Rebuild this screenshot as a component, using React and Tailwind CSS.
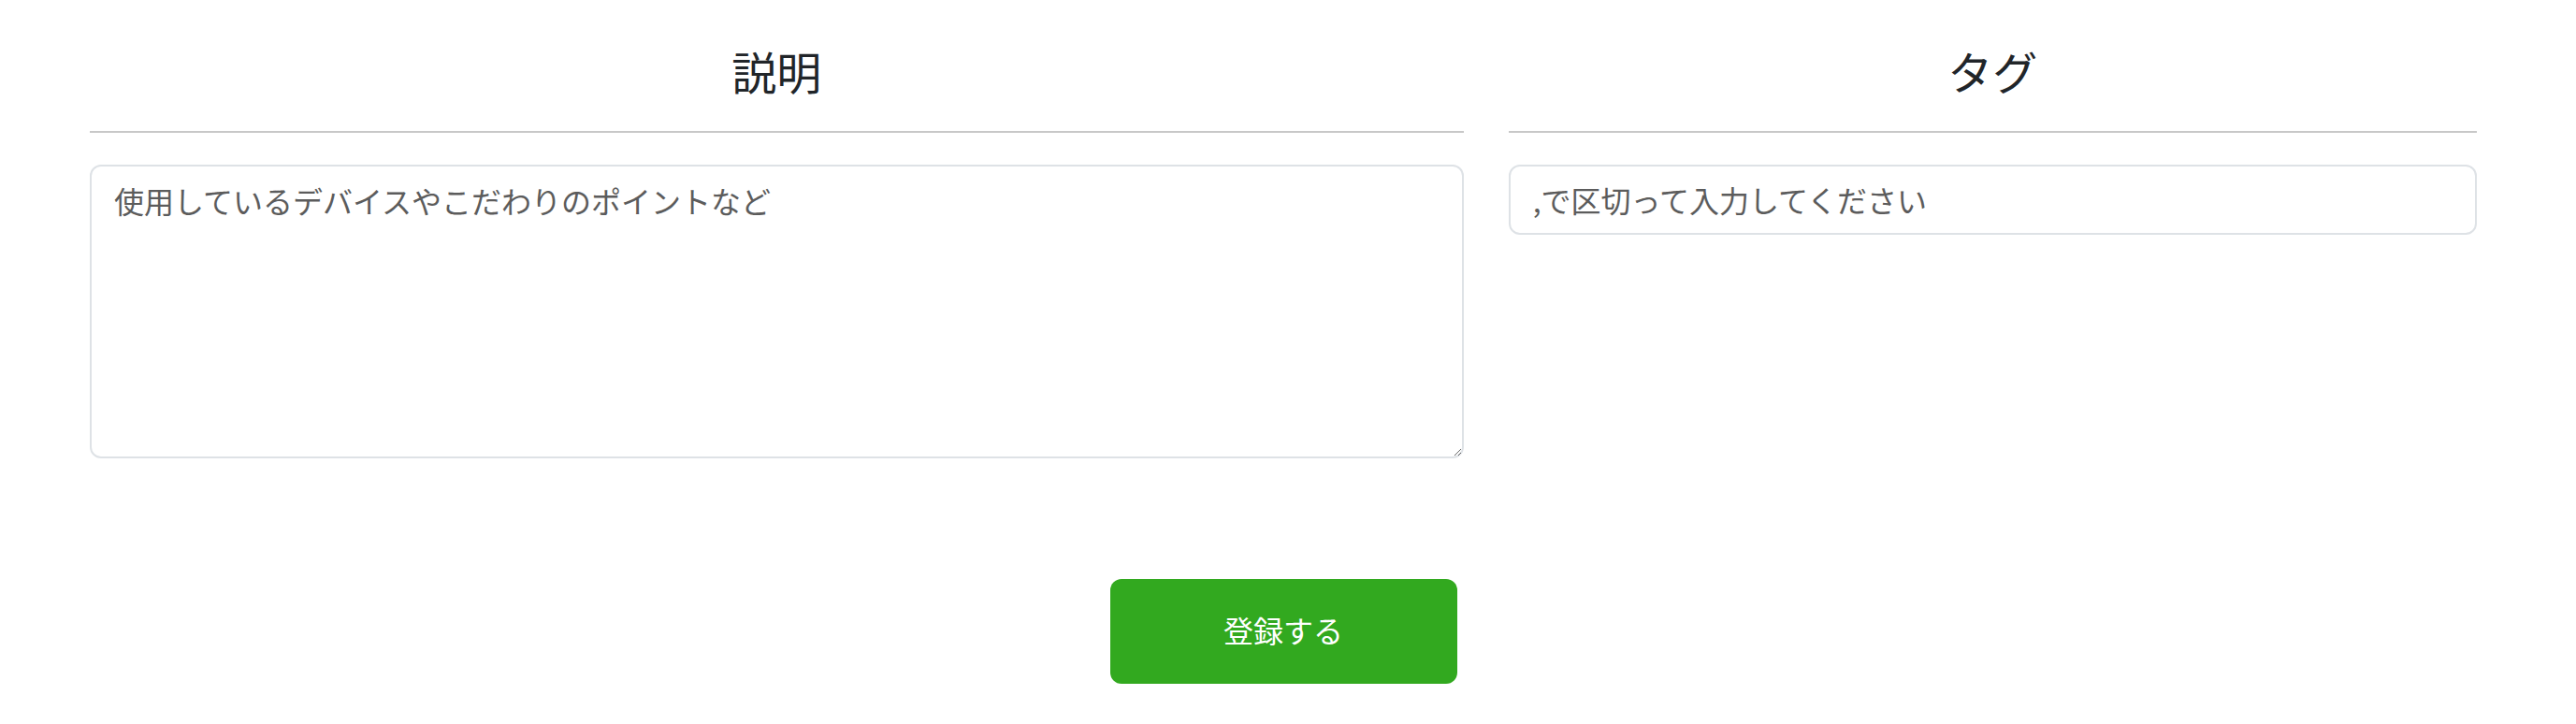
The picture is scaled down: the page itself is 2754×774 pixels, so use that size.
import React from 'react'

const Field = ({ title, className, children }) => (
  <div className={`px-[24px] ${className}`}>
    <h2 className="pt-[47px] pb-[35px] border-b-2 border-[#c8c8c8] text-center text-[48px] leading-[1.2] font-normal text-[#212529]">
      {title}
    </h2>
    <div className="mt-[34px]">{children}</div>
  </div>
)

const App = () => {
  return (
    <div className="min-h-screen bg-white font-['Noto_Sans_CJK_JP',sans-serif]">
      <div className="ml-[72px] w-[2600px]">
        <div className="flex">
          <Field title="説明" className="w-7/12">
            <textarea
              className="block h-[314px] w-full rounded-[12px] border-2 border-[#dee2e6] bg-white px-[24px] py-[12px] text-[32px] leading-[1.5] text-[#212529] placeholder:text-[#5c5c5c] outline-none"
              placeholder="使用しているデバイスやこだわりのポイントなど"
            />
          </Field>
          <Field title="タグ" className="w-5/12">
            <input
              type="text"
              className="block h-[75px] w-full rounded-[12px] border-2 border-[#dee2e6] bg-white px-[24px] py-[12px] text-[32px] leading-[1.5] text-[#212529] placeholder:text-[#5c5c5c] outline-none"
              placeholder=",で区切って入力してください"
            />
          </Field>
        </div>
        <div className="mt-[129px] flex justify-center">
          <button className="h-[112px] w-[371px] rounded-[12px] bg-[#32a91f] pb-[4px] text-[32px] text-white">
            登録する
          </button>
        </div>
      </div>
    </div>
  )
}

export default App
